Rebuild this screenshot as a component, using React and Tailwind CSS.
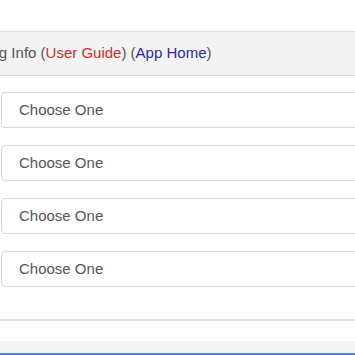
import React from "react";

function SelectBox() {
  return (
    <div className="h-[36px] ml-[1px] -mr-[10px] flex items-center pl-[17px] border border-[#d6d6d6] rounded-[4px] bg-white text-[15px] text-[#555]">
      Choose One
    </div>
  );
}

export default function App() {
  return (
    <div
      className="w-[355px] h-[355px] overflow-hidden bg-white flex flex-col"
      style={{ fontFamily: '"Liberation Sans", Arial, sans-serif' }}
    >
      {/* Header bar */}
      <div className="mt-[31px] h-[45px] border-y border-[#dcdcdc] bg-[#f3f3f3] flex items-center">
        <span className="ml-[-37px] whitespace-nowrap text-[15px] text-[#555]">
          Debug Info (<span className="text-[#c9302c]">User Guide</span>) (<span className="text-[#2a2aa8]">App Home</span>)
        </span>
      </div>

      {/* Selects */}
      <div className="mt-[16px] flex flex-col gap-[17px]">
        <SelectBox />
        <SelectBox />
        <SelectBox />
        <SelectBox />
      </div>

      {/* Footer */}
      <div className="mt-[32px] border-t-2 border-[#e2e2e2]" />
      <div className="mt-[20px] h-[12px] bg-[#f4f4f4]" />
      <div className="h-[2px] bg-[#5b7fd6]" />
    </div>
  );
}
